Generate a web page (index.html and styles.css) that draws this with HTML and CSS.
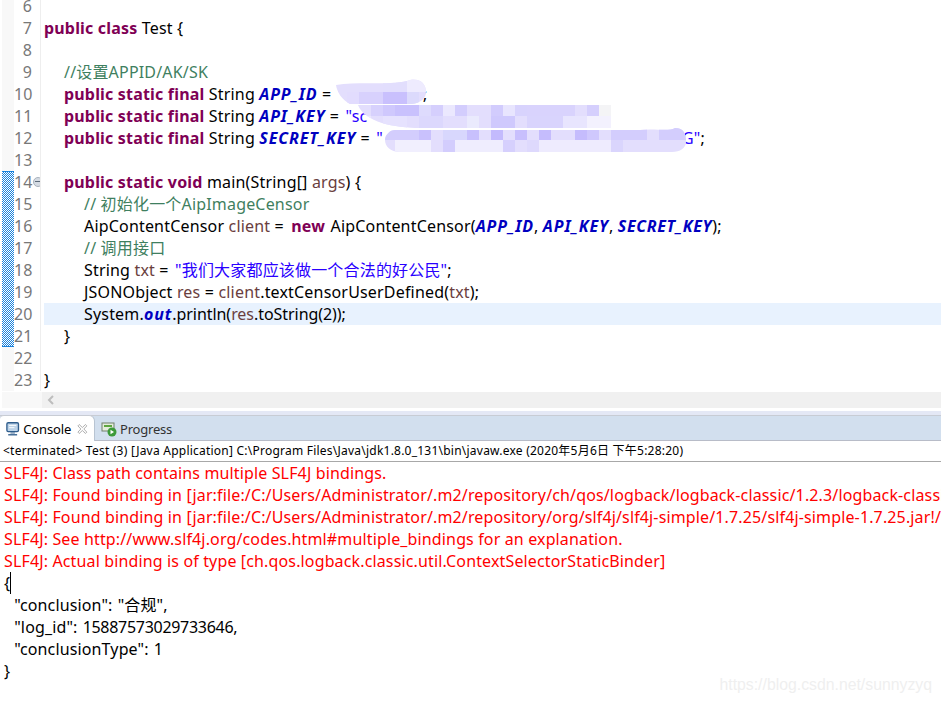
FILE: index.html
```html
<!DOCTYPE html>
<html lang="zh">
<head>
<meta charset="utf-8">
<title>Test.java</title>
<link rel="stylesheet" href="styles.css">
</head>
<body>
<main class="workbench">
  <section class="editor">
    <div class="lines">
      <div class="line"><span class="ann"></span><span class="num">6</span><span class="code"></span></div>
      <div class="line"><span class="ann"></span><span class="num">7</span><span class="code"><b>public class</b> Test {</span></div>
      <div class="line"><span class="ann"></span><span class="num">8</span><span class="code"></span></div>
      <div class="line"><span class="ann"></span><span class="num">9</span><span class="code i1"><span class="cm">//设置APPID/AK/SK</span></span></div>
      <div class="line"><span class="ann"></span><span class="num">10</span><span class="code i1"><b>public static final</b> String <em>APP_ID</em> = <span class="st">"<i class="key-id"></i>"</span>;</span></div>
      <div class="line"><span class="ann"></span><span class="num">11</span><span class="code i1"><b>public static final</b> String <em>API_KEY</em> = <span class="st">"sc<i class="key-api"></i>"</span>;</span></div>
      <div class="line"><span class="ann"></span><span class="num">12</span><span class="code i1"><b>public static final</b> String <em>SECRET_KEY</em> = <span class="st">"<i class="key-secret"></i>G"</span>;</span></div>
      <div class="line"><span class="ann"></span><span class="num">13</span><span class="code"></span></div>
      <div class="line"><span class="ann changed start"></span><span class="num fold-row">14<i class="fold"></i></span><span class="code i1"><b>public static void</b> main(String[] <span class="var">args</span>) {</span></div>
      <div class="line"><span class="ann changed"></span><span class="num">15</span><span class="code i2"><span class="cm">// 初始化一个AipImageCensor</span></span></div>
      <div class="line"><span class="ann changed"></span><span class="num">16</span><span class="code i2">AipContentCensor <span class="var">client</span> = <b class="new-kw">new</b> AipContentCensor(<em>APP_ID</em>, <em>API_KEY</em>, <em class="overlap">SECRET_KEY</em>);</span></div>
      <div class="line"><span class="ann changed"></span><span class="num">17</span><span class="code i2"><span class="cm">// 调用接口</span></span></div>
      <div class="line"><span class="ann changed"></span><span class="num">18</span><span class="code i2">String <span class="var">txt</span> = <span class="st">"我们大家都应该做一个合法的好公民"</span>;</span></div>
      <div class="line"><span class="ann changed"></span><span class="num">19</span><span class="code i2">JSONObject <span class="var">res</span> = <span class="var">client</span>.textCensorUserDefined(<span class="var">txt</span>);</span></div>
      <div class="line current"><span class="ann changed"></span><span class="num">20</span><span class="code i2">System.<em class="field">out</em><span class="snug">.println(<span class="var">res</span>.toString(2));</span></span></div>
      <div class="line"><span class="ann changed end"></span><span class="num">21</span><span class="code i1">}</span></div>
      <div class="line"><span class="ann"></span><span class="num">22</span><span class="code"></span></div>
      <div class="line"><span class="ann"></span><span class="num">23</span><span class="code">}</span></div>
    </div>
    <div class="hscroll">
      <svg class="arrow" width="8" height="10" viewBox="0 0 8 10"><path d="M6 1 2 5l4 4" fill="none" stroke="#bdbdbd" stroke-width="2"/></svg>
    </div>
    <svg class="mosaic" width="941" height="160" viewBox="0 0 941 160">
      <defs>
        <clipPath id="blobs">
          <path d="M336 85C360 81 395 86 410 80 420 78 426 84 426 92 426 99 420 103 412 104H350C342 100 337 92 336 85Z"/>
          <path d="M358 105H611V128H420C395 128 364 122 358 105Z"/>
          <path d="M395 130H640C655 128 668 132 675 128 684 128 686 134 686 142 686 148 680 152 672 152H400C390 152 385 146 385 140 385 135 390 130 395 130Z"/>
        </clipPath>
      </defs>
      <g clip-path="url(#blobs)">
        <rect x="335" y="78" width="360" height="76" fill="#e3defd"/>
        <rect x="347" y="92" width="12" height="12" fill="#e2dcfe"/><rect x="359" y="92" width="24" height="12" fill="#d8d1fd"/><rect x="383" y="92" width="24" height="12" fill="#c9c0fd"/><rect x="407" y="92" width="12" height="12" fill="#dcdafc"/>
        <rect x="407" y="80" width="19" height="12" fill="#eeebfe"/><rect x="383" y="80" width="24" height="12" fill="#e2defd"/>
        <rect x="371" y="105" width="12" height="11" fill="#d7d1fd"/><rect x="383" y="105" width="12" height="11" fill="#cfc8fd"/><rect x="395" y="105" width="24" height="11" fill="#c9c1fd"/><rect x="419" y="105" width="12" height="11" fill="#dedbfd"/><rect x="431" y="105" width="12" height="11" fill="#d5cffd"/><rect x="443" y="105" width="12" height="11" fill="#ebe8fe"/><rect x="455" y="105" width="12" height="11" fill="#d3cdfd"/><rect x="491" y="105" width="12" height="11" fill="#d2ccfd"/><rect x="503" y="105" width="12" height="11" fill="#e8e5fe"/><rect x="515" y="105" width="12" height="11" fill="#d8d3fd"/><rect x="527" y="105" width="48" height="11" fill="#d9d3fd"/><rect x="587" y="105" width="12" height="11" fill="#d5cffd"/><rect x="599" y="105" width="12" height="11" fill="#f4f4f6"/>
        <rect x="347" y="116" width="24" height="12" fill="#ece9fe"/><rect x="383" y="116" width="24" height="12" fill="#e6e2fe"/><rect x="419" y="116" width="24" height="12" fill="#dcd8fd"/><rect x="467" y="116" width="12" height="12" fill="#eaeafd"/><rect x="491" y="116" width="24" height="12" fill="#cfc9fd"/><rect x="527" y="116" width="36" height="12" fill="#d9d4fd"/><rect x="563" y="116" width="24" height="12" fill="#e8e5fe"/><rect x="587" y="116" width="24" height="12" fill="#f3f1fe"/>
        <rect x="383" y="128" width="48" height="12" fill="#d3cdfd"/><rect x="419" y="128" width="12" height="12" fill="#c9c1fd"/><rect x="443" y="128" width="24" height="12" fill="#d8d7fd"/><rect x="467" y="128" width="12" height="12" fill="#c8c0fd"/><rect x="491" y="128" width="12" height="12" fill="#c3bafd"/><rect x="515" y="128" width="12" height="12" fill="#c8bffd"/><rect x="539" y="128" width="12" height="12" fill="#c5bcfd"/><rect x="575" y="128" width="12" height="12" fill="#c5bcfd"/><rect x="587" y="128" width="12" height="12" fill="#cfc8fd"/><rect x="611" y="128" width="36" height="12" fill="#d3cdfd"/><rect x="659" y="128" width="27" height="12" fill="#d3cdfd"/>
        <rect x="395" y="140" width="36" height="12" fill="#f1effe"/><rect x="443" y="140" width="12" height="12" fill="#d3cdfd"/><rect x="455" y="140" width="48" height="12" fill="#efedfe"/><rect x="503" y="140" width="12" height="12" fill="#d6d0fd"/><rect x="527" y="140" width="12" height="12" fill="#ded9fd"/><rect x="539" y="140" width="72" height="12" fill="#eeebfe"/><rect x="611" y="140" width="12" height="12" fill="#dad5fd"/>
      </g>
    </svg>
  </section>

  <div class="sash"></div>

  <section class="console">
    <div class="tabs">
      <div class="tab active">
        <svg class="ico" width="16" height="16" viewBox="0 0 16 16"><rect x="1" y="1" width="13" height="10" rx="1.500" fill="#bdd3e8" stroke="#2f5d8c" stroke-width="1.500"/><path d="M3.500 4h8M3.500 6.500h6" stroke="#fff"/><path d="M5 12.500h5" stroke="#2f5d8c"/><path d="M2.500 14.500h10" stroke="#2f5d8c" stroke-width="1.500"/></svg>
        <span class="tab-label">Console</span>
        <svg class="close" width="12" height="12" viewBox="0 0 12 12"><path d="M1 2.500 2.500 1 6 4.300 9.500 1 11 2.500 7.700 6 11 9.500 9.500 11 6 7.700 2.500 11 1 9.500 4.300 6Z" fill="#fff" stroke="#8e8e8e" stroke-width=".8"/></svg>
      </div>
      <div class="tab">
        <svg class="ico" width="16" height="16" viewBox="0 0 16 16"><rect x="1" y="2" width="12" height="8" fill="#e4ecdc" stroke="#71806b"/><path d="M3 5h8" stroke="#5ea640" stroke-width="2"/><circle cx="11" cy="11" r="4.500" fill="#3c9a3a"/><path d="m9.500 8.800 3.500 2.200-3.500 2.200Z" fill="#fff"/></svg>
        <span class="tab-label progress">Progress</span>
      </div>
    </div>
    <div class="status">&lt;terminated&gt; Test (3) [Java Application] C:\Program Files\Java\jdk1.8.0_131\bin\javaw.exe (2020年5月6日 下午5:28:20)</div>
    <div class="output">
      <div class="err">SLF4J: Class path contains multiple SLF4J bindings.</div>
      <div class="err">SLF4J: Found binding in [jar:file:/C:/Users/Administrator/.m2/repository/ch/qos/logback/logback-classic/1.2.3/logback-classic-1.2.3.jar!/org/slf4j/impl/StaticLoggerBinder.class]</div>
      <div class="err">SLF4J: Found binding in [jar:file:/C:/Users/Administrator/.m2/repository/org/slf4j/slf4j-simple/1.7.25/slf4j-simple-1.7.25.jar!/org/slf4j/impl/StaticLoggerBinder.class]</div>
      <div class="err">SLF4J: See http://www.slf4j.org/codes.html#multiple_bindings for an explanation.</div>
      <div class="err">SLF4J: Actual binding is of type [ch.qos.logback.classic.util.ContextSelectorStaticBinder]</div>
      <div class="out"><span class="caret">{</span></div>
      <div class="out">  "conclusion": "合规",</div>
      <div class="out">  "log_id": <span class="digits">15887573029733646</span>,</div>
      <div class="out">  "conclusionType": 1</div>
      <div class="out">}</div>
    </div>
    <div class="watermark">https://blog.csdn.net/sunnyzyq</div>
  </section>
</main>
</body>
</html>
```
FILE: styles.css
```css
* { box-sizing: border-box; }
html, body { margin: 0; height: 100%; overflow: hidden; background: #fff; }
body { font-family: "Noto Sans", "Noto Sans CJK SC", sans-serif; font-size: 16px; color: #000; letter-spacing: .18px; }
.workbench { width: 941px; height: 702px; display: flex; flex-direction: column; position: relative; overflow: hidden; }

.editor { height: 408px; flex: none; overflow: hidden; position: relative; display: flex; flex-direction: column; }
.lines { height: 391px; margin-bottom: 1px; overflow: hidden; padding-left: 2px; display: flex; flex-direction: column; justify-content: flex-end; flex: none; }
.line { height: 22px; flex: none; display: flex; line-height: 22px; }
.ann { width: 12px; flex: none; background: #f8f8f8; }
.changed { background: #fff url("data:image/svg+xml,%3Csvg xmlns='http://www.w3.org/2000/svg' width='2' height='2' shape-rendering='crispEdges'%3E%3Crect width='1' height='1' fill='%231a82dc'/%3E%3Crect x='1' y='1' width='1' height='1' fill='%231a82dc'/%3E%3C/svg%3E") 0 0 / 2px 2px; image-rendering: pixelated; }
.start { box-shadow: inset 0 1px 0 #1a82dc; }
.end { box-shadow: inset 0 -1px 0 #1a82dc; }
.num { width: 27px; flex: none; text-align: right; color: #787878; padding-right: 9px; position: relative; background: #fff; letter-spacing: 0; }
.fold { position: absolute; left: 19px; top: 6px; width: 10px; height: 10px; border-radius: 50%; background: #d5dbe3; border: 1px solid #a9b2bd; }
.fold::after { content: ""; position: absolute; left: 1px; top: 3px; width: 6px; height: 1px; background: #5d6b7a; }
.code { flex: 1; min-width: 0; margin-left: 3px; white-space: pre; position: relative; box-shadow: -3px 0 0 #fff, -4px 0 0 #eeeeee; }
.i1 { padding-left: 20px; }
.i2 { padding-left: 40px; }
.current .code { background: #e8f2fe; }
b { color: #7f0055; font-weight: 700; }
em { color: #0000c0; font-style: italic; font-weight: 700; letter-spacing: .9px; }
.new-kw { margin-left: 3px; margin-right: 1px; }
.overlap { letter-spacing: .65px; }
.snug { letter-spacing: -.05px; }
.cm { color: #3f7f5f; }
.st { color: #2a00ff; margin-left: 2px; }
.key-id, .key-api, .key-secret { display: inline-block; }
.key-id { width: 72px; }
.key-api { width: 200px; }
.key-secret { width: 299px; }
.var { color: #6a3e3e; }

.hscroll { height: 16px; flex: none; margin-left: 2px; background: linear-gradient(90deg, #f8f8f8 40px, #f0f0f0 40px); display: flex; align-items: center; padding-left: 45px; }
.mosaic { position: absolute; left: 0; top: 0; pointer-events: none; }

.sash { height: 7px; flex: none; background: linear-gradient(#fff 0 3px, #e4e8f5 3px); }

.console { flex: 1; min-height: 0; position: relative; display: flex; flex-direction: column; }
.tabs { height: 26px; flex: none; display: flex; background: #d2dfee; border-top: 1px solid #c8ccd4; border-bottom: 1px solid #b8bcc8; }
.tab { display: flex; align-items: center; gap: 3px; font-size: 13px; padding: 0 6px; height: 25px; color: #333; letter-spacing: 0; }
.tab-label { letter-spacing: -.12px; }
.tab-label.progress { letter-spacing: -.2px; }
.tab.active { width: 95px; margin-top: -1px; height: 26px; background: #fff; color: #000; border-right: 1px solid #b8c4d2; border-top-right-radius: 6px; border-top-left-radius: 4px; border-top: 1px solid #c8ccd4; }
.close { margin-left: 3px; }
.status { height: 21px; flex: none; font-size: 12px; line-height: 20px; padding-left: 3px; white-space: pre; border-bottom: 1px solid #a8a8a8; letter-spacing: .23px; }
.output { flex: 1; min-height: 0; overflow: hidden; padding-left: 4px; line-height: 22px; letter-spacing: .14px; }
.err { color: #f00; height: 22px; white-space: pre; }
.out { height: 22px; white-space: pre; word-spacing: .8px; }
.digits { letter-spacing: -.29px; }
.caret { display: inline-block; box-shadow: 1px 0 0 #000; }
.watermark { position: absolute; right: 9px; bottom: 8px; font-family: "Liberation Sans", sans-serif; font-size: 15.8px; color: #efefef; letter-spacing: 0; }
```
